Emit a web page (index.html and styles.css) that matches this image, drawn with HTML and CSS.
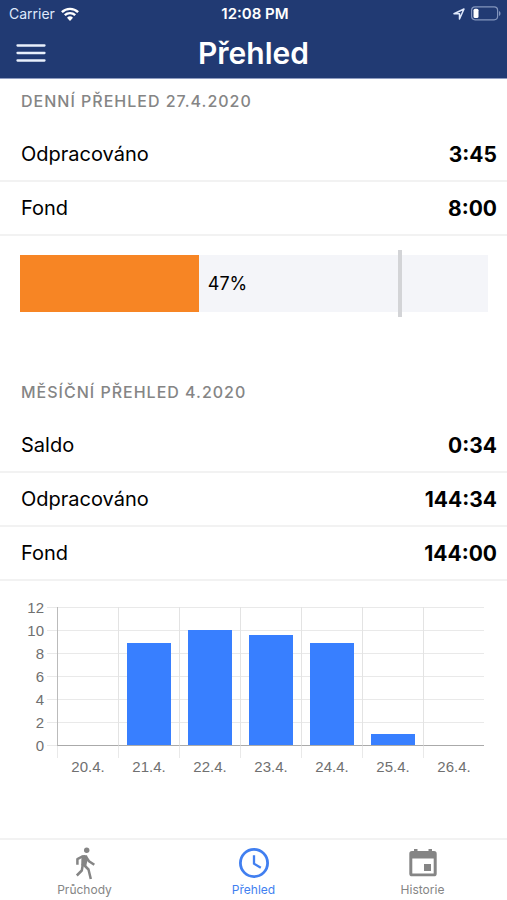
FILE: index.html
```html
<!DOCTYPE html>
<html lang="cs">
<head>
<meta charset="utf-8">
<meta name="viewport" content="width=device-width, initial-scale=1">
<title>Přehled</title>
<link rel="stylesheet" href="styles.css">
</head>
<body>
<header class="header">
  <div class="status">
    <div class="status-side">
      <span class="carrier">Carrier</span>
      <svg width="18" height="14" viewBox="0 0 18 14" aria-hidden="true">
        <g fill="none" stroke="#fff" stroke-width="2.4">
          <path d="M.9 5.2a11.6 11.6 0 0 1 16.2 0"/>
          <path d="M3.800 8.200a7.500 7.500 0 0 1 10.400 0"/>
        </g>
        <path fill="#fff" d="M9 14l-3-3.200a4.300 4.300 0 0 1 6 0z"/>
      </svg>
    </div>
    <span class="clock">12:08 PM</span>
    <div class="status-side status-right">
      <svg width="12" height="12" viewBox="0 0 12 12" aria-hidden="true">
        <path d="M1 5.800L11 1 6.500 11V5.800z" fill="none" stroke="#dfe8fb" stroke-width="1.500" stroke-linejoin="round"/>
      </svg>
      <svg width="30" height="15" viewBox="0 0 30 15" aria-hidden="true">
        <rect x=".6" y=".8" width="26" height="13" rx="3.500" fill="none" stroke="#8395bd" stroke-width="1.200"/>
        <rect x="2.500" y="2.700" width="5" height="9.200" rx="1.500" fill="#fff"/>
        <path d="M28 5c2 .7 2 4.300 0 5z" fill="#8395bd"/>
      </svg>
    </div>
  </div>
  <div class="toolbar">
    <button class="menu" type="button" aria-label="Menu">
      <svg width="30" height="20" viewBox="0 0 30 20" aria-hidden="true">
        <path d="M1.500 2.500h27M1.500 10h27M1.500 17.500h27" stroke="#e9f0fc" stroke-width="2.300" stroke-linecap="round"/>
      </svg>
    </button>
    <h1 class="title">Přehled</h1>
  </div>
</header>

<main class="content">
  <section>
    <h2 class="section-title">DENNÍ PŘEHLED 27.4.2020</h2>
    <dl class="list">
      <div class="row"><dt>Odpracováno</dt><dd>3:45</dd></div>
      <div class="row"><dt>Fond</dt><dd>8:00</dd></div>
    </dl>
    <div class="progress" role="progressbar" aria-label="Odpracováno" aria-valuenow="47" aria-valuemin="0" aria-valuemax="125">
      <div class="progress-fill" style="width:38.2%"></div>
      <span class="progress-label">47%</span>
      <div class="progress-mark" style="left:80.7%"></div>
    </div>
  </section>

  <section>
    <h2 class="section-title">MĚSÍČNÍ PŘEHLED 4.2020</h2>
    <dl class="list">
      <div class="row"><dt>Saldo</dt><dd>0:34</dd></div>
      <div class="row"><dt>Odpracováno</dt><dd>144:34</dd></div>
      <div class="row"><dt>Fond</dt><dd>144:00</dd></div>
    </dl>
    <div class="chart">
      <div class="y-axis"><span>12</span><span>10</span><span>8</span><span>6</span><span>4</span><span>2</span><span>0</span></div>
      <div class="plot">
        <div class="day"><div class="slot"></div><span>20.4.</span></div>
        <div class="day"><div class="slot"><div class="bar" style="height:73.900%"></div></div><span>21.4.</span></div>
        <div class="day"><div class="slot"><div class="bar" style="height:83%"></div></div><span>22.4.</span></div>
        <div class="day"><div class="slot"><div class="bar" style="height:79.800%"></div></div><span>23.4.</span></div>
        <div class="day"><div class="slot"><div class="bar" style="height:74.200%"></div></div><span>24.4.</span></div>
        <div class="day"><div class="slot"><div class="bar" style="height:7.800%"></div></div><span>25.4.</span></div>
        <div class="day"><div class="slot"></div><span>26.4.</span></div>
      </div>
    </div>
  </section>
</main>

<nav class="tabs">
  <a class="tab" href="#pruchody">
    <svg width="34" height="34" viewBox="0 0 34 34" aria-hidden="true">
      <circle cx="18.700" cy="4.200" r="2.700" fill="currentColor"/>
      <path d="M13.500 9.800l5.500-.6.800 4-1.600 6.800-5-.5z" fill="currentColor"/>
      <g fill="none" stroke="currentColor" stroke-width="2.500" stroke-linejoin="round">
        <path d="M17.500 10.300l-3.300.2-4.800 2.600v5.700"/>
        <path d="M17.800 10.500l3.200 4.700 5.300 3.600"/>
        <path d="M14.800 18.500l-1 6-5 5"/>
        <path d="M15.500 18.500l5 5 2.300 9.500"/>
      </g>
    </svg>
    <span>Průchody</span>
  </a>
  <a class="tab tab-active" href="#prehled" aria-current="page">
    <svg width="34" height="34" viewBox="0 0 34 34" aria-hidden="true">
      <circle cx="17" cy="17" r="13.600" fill="none" stroke="currentColor" stroke-width="2.800"/>
      <path d="M17 9.300v8.400l6.800 4" fill="none" stroke="currentColor" stroke-width="2.300"/>
    </svg>
    <span>Přehled</span>
  </a>
  <a class="tab" href="#historie">
    <svg width="34" height="34" viewBox="0 0 34 34" aria-hidden="true">
      <path fill="currentColor" fill-rule="evenodd" d="M6 5h2V3h3.500v2h11V3H26v2h2a2.700 2.700 0 0 1 2.700 2.700v20A2.700 2.700 0 0 1 28 30.300H6a2.700 2.700 0 0 1-2.700-2.600v-20A2.700 2.700 0 0 1 6 5zm.300 7.500v15h21.400v-15z"/>
      <path fill="currentColor" d="M18 18h7v7h-7z"/>
    </svg>
    <span>Historie</span>
  </a>
</nav>
</body>
</html>
```
FILE: styles.css
```css
* {
  box-sizing: border-box;
}

body {
  margin: 0;
  min-height: 100vh;
  display: flex;
  flex-direction: column;
  background: #fff;
  color: #000;
  font-family: Inter, "Liberation Sans", sans-serif;
}

h1, h2, dl, dd {
  margin: 0;
}

.header {
  background: #213a73;
  color: #fff;
  border-bottom: 1px solid #8f9cc0;
}

.status {
  display: grid;
  grid-template-columns: 1fr auto 1fr;
  align-items: center;
  height: 27px;
  padding: 0 6px 0 9px;
  font-size: 14px;
}

.status-side {
  display: flex;
  align-items: center;
  gap: 6px;
}

.status-right {
  justify-content: flex-end;
}

.clock {
  font-size: 15px;
  font-weight: 600;
}

.carrier {
  color: #dfe8fb;
}

.toolbar {
  display: grid;
  grid-template-columns: 48px 1fr 48px;
  align-items: center;
  height: 51px;
}

.menu {
  display: flex;
  padding: 0 0 0 16px;
  border: 0;
  background: none;
}

.title {
  font-size: 30px;
  font-weight: 600;
  line-height: 48px;
  text-align: center;
}

.content {
  flex: 1;
}

.section-title {
  padding: 11px 21px 15px;
  color: #858585;
  font-size: 16px;
  font-weight: 500;
  line-height: 23px;
  letter-spacing: 1px;
}

.row {
  display: flex;
  align-items: center;
  justify-content: space-between;
  height: 54px;
  padding: 0 10px 0 21px;
  border-bottom: 2px solid #f2f2f2;
  font-size: 20px;
}

.row dd {
  font-size: 21px;
  font-weight: 700;
}

.progress {
  position: relative;
  display: flex;
  align-items: center;
  height: 57px;
  margin: 19px 19px 58px 20px;
  background: #f4f5f9;
  font-size: 18px;
}

.progress-fill {
  height: 100%;
  background: #f78524;
}

.progress-label {
  padding-left: 9px;
}

.progress-mark {
  position: absolute;
  top: -5px;
  bottom: -5px;
  width: 4px;
  background: #d3d4d7;
}

.chart {
  display: flex;
  padding: 15px 23px 24px 20px;
  color: #707070;
  font-family: "Liberation Sans", sans-serif;
  font-size: 15px;
}

.y-axis {
  display: flex;
  flex-direction: column;
  width: 27px;
  padding-right: 3px;
  line-height: 23px;
  text-align: right;
}

.plot {
  flex: 1;
  display: grid;
  grid-template-columns: repeat(7, 1fr);
  margin-top: 11px;
  padding-left: 10px;
  background: repeating-linear-gradient(#e9e9e9 0 1px, transparent 1px 23px) 0 0 / 100% 139px no-repeat;
}

.day {
  display: flex;
  flex-direction: column;
  text-align: center;
}

.slot {
  display: flex;
  align-items: flex-end;
  justify-content: center;
  height: 139px;
  border-bottom: 1px solid #aaa;
  border-left: 1px solid #e3e3e3;
}

.day:first-child .slot {
  border-left-color: #bbb;
}

.day span {
  border-left: 1px solid transparent;
  border-image: linear-gradient(#e9e9e9 12px, transparent 12px) 1;
  padding-top: 11px;
  line-height: 20px;
}

.bar {
  width: 73%;
  background: #387fff;
}

.tabs {
  display: grid;
  grid-template-columns: repeat(3, 1fr);
  height: 62px;
  border-top: 2px solid #f2f2f2;
}

.tab {
  display: flex;
  flex-direction: column;
  align-items: center;
  padding-top: 6px;
  color: #858585;
  font-size: 12px;
  line-height: 16px;
  text-decoration: none;
}

.tab span {
  margin-top: 2px;
}

.tab-active {
  color: #417ff0;
}
```
